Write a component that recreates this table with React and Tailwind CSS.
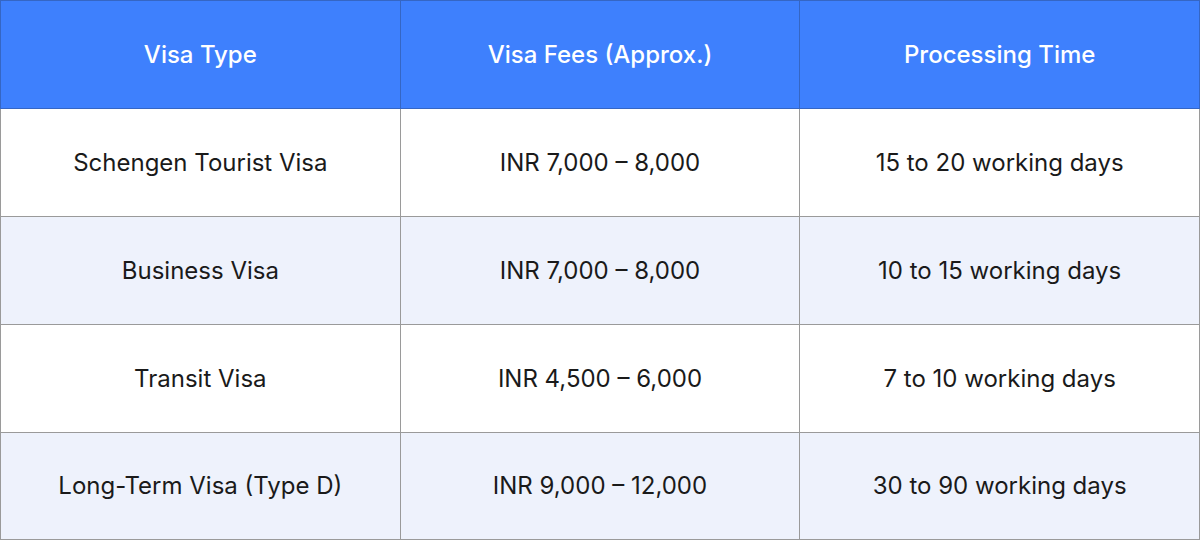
import React from 'react';

const rows = [
  ['Schengen Tourist Visa', 'INR 7,000 – 8,000', '15 to 20 working days'],
  ['Business Visa', 'INR 7,000 – 8,000', '10 to 15 working days'],
  ['Transit Visa', 'INR 4,500 – 6,000', '7 to 10 working days'],
  ['Long-Term Visa (Type D)', 'INR 9,000 – 12,000', '30 to 90 working days'],
];

export default function App() {
  return (
    <div className="w-[1200px] h-[540px] bg-white font-['Inter',sans-serif] overflow-hidden">
      <table className="w-full table-fixed border-collapse">
        <thead>
          <tr className="h-[108px] bg-[#3e80fd]">
            <th className="border border-[#3566c4] text-white text-[24px] font-medium">Visa Type</th>
            <th className="border border-[#3566c4] text-white text-[24px] font-medium">Visa Fees (Approx.)</th>
            <th className="border border-[#3566c4] text-white text-[24px] font-medium">Processing Time</th>
          </tr>
        </thead>
        <tbody>
          {rows.map((r, i) => (
            <tr key={i} className={(i % 2 === 1 ? 'bg-[#eef2fc] ' : 'bg-white ') + (i === 3 ? 'h-[107px]' : 'h-[108px]')}>
              {r.map((c, j) => (
                <td key={j} className="border border-[#9a9a9a] text-center text-[24px] text-[#1a1a1a]">{c}</td>
              ))}
            </tr>
          ))}
        </tbody>
      </table>
    </div>
  );
}
